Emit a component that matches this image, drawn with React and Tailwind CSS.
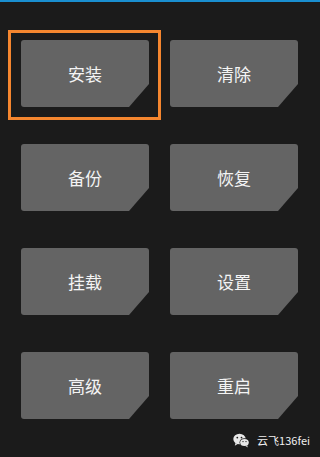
const buttons = ['安装', '清除', '备份', '恢复', '挂载', '设置', '高级', '重启'];

function WeChatIcon() {
  return (
    <svg width="17" height="15" viewBox="0 0 17 15">
      <ellipse cx="6.5" cy="6" rx="6.2" ry="5.2" fill="#e8e8e8" />
      <path d="M2.5 10 L1.8 12.8 L5 10.8 Z" fill="#e8e8e8" />
      <circle cx="4.3" cy="4.6" r="0.9" fill="#1b1b1b" />
      <circle cx="8.5" cy="4.6" r="0.9" fill="#1b1b1b" />
      <ellipse cx="11.5" cy="9.5" rx="5" ry="4.2" fill="#1b1b1b" />
      <ellipse cx="11.5" cy="9.5" rx="4.3" ry="3.6" fill="#e8e8e8" />
      <path d="M14 12.4 L15 14.6 L12.4 13 Z" fill="#e8e8e8" />
      <circle cx="10" cy="8.6" r="0.7" fill="#1b1b1b" />
      <circle cx="13" cy="8.6" r="0.7" fill="#1b1b1b" />
    </svg>
  );
}

export default function App() {
  return (
    <div className="w-[320px] h-[457px] bg-[#1b1b1b] flex flex-col overflow-hidden" style={{ fontFamily: '"Noto Sans CJK SC", "Noto Sans", sans-serif' }}>
      <div className="h-[2px] bg-[#1a8fd0]" />
      <div className="grid grid-cols-[128px_128px] gap-x-[21px] gap-y-[37px] pl-[21px] pt-[38px]">
        {buttons.map((label, i) => (
          <div key={label} className="relative">
            {i === 0 && (
              <div className="absolute -left-[13px] -right-[12px] -top-[10px] -bottom-[13px] border-[3px] border-[#f5862f]" />
            )}
            <div className="h-[67px] rounded-[3px] bg-[#646464] flex items-center justify-center text-[17px] text-[#f4f4f4] [clip-path:polygon(0_0,100%_0,100%_calc(100%-23px),calc(100%-20px)_100%,0_100%)]">
              {label}
            </div>
          </div>
        ))}
      </div>
      <div className="flex items-center justify-end gap-[7px] pr-[10px] pt-[14px]">
        <WeChatIcon />
        <span className="text-[11px] text-[#f0f0f0] leading-none">云飞136fei</span>
      </div>
    </div>
  );
}
